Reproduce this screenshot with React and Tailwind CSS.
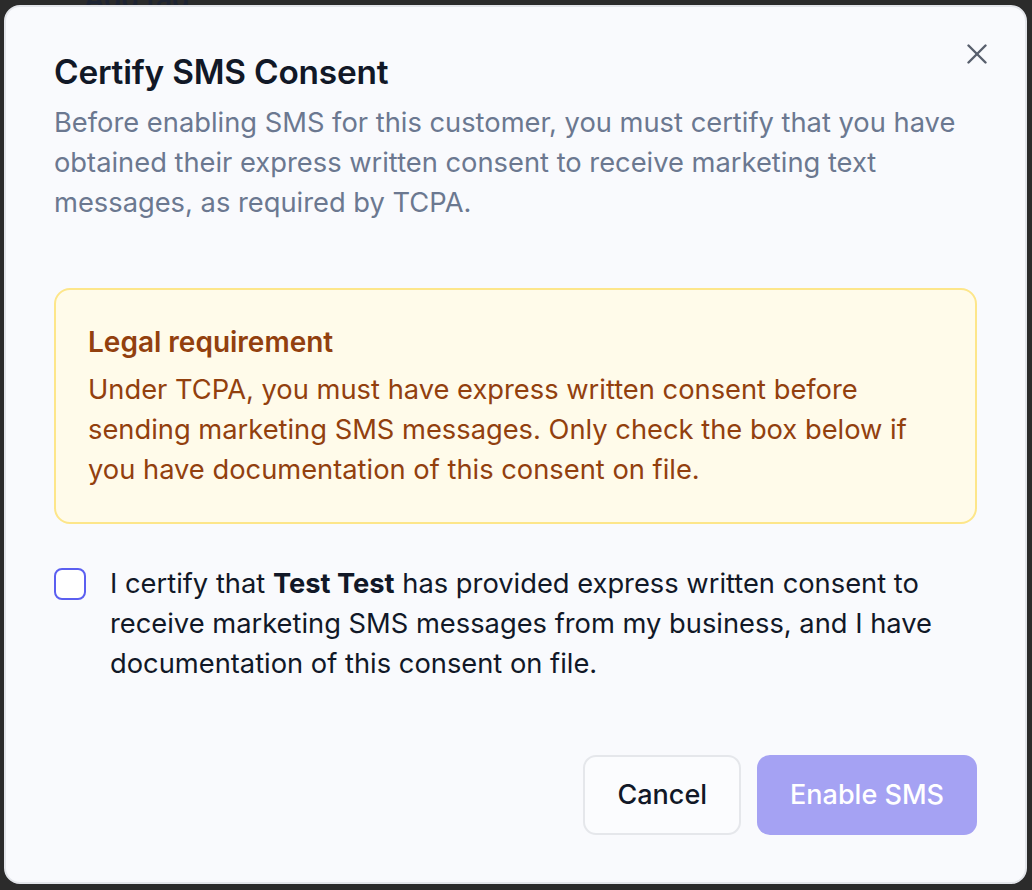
import React, { useState } from "react";

function CloseIcon() {
  return (
    <svg width="20" height="20" viewBox="0 0 20 20" fill="none" stroke="currentColor" strokeWidth="2.4" strokeLinecap="round">
      <path d="M1.5 1.5 18.5 18.5" />
      <path d="M18.5 1.5 1.5 18.5" />
    </svg>
  );
}

export default function App() {
  const [agreed, setAgreed] = useState(false);

  return (
    <div
      className="relative min-h-[890px] w-full overflow-hidden bg-[#2b2b2b]"
      style={{ fontFamily: "Inter, 'Noto Sans', sans-serif" }}
    >
      {/* page behind the modal */}
      <div className="flex items-center gap-3 pl-[84px] -mt-[22px] text-[28px] font-semibold text-[#1e2433]">
        <span>Add tag</span>
      </div>

      {/* modal */}
      <div className="absolute left-[4px] top-[5px] w-[1023px] h-[879px] rounded-2xl border-2 border-[#e3e5ea] bg-[#f9fafd] px-[48px] pt-[46px]">
        <button className="absolute right-[38px] top-[37px] text-[#585f6d]">
          <CloseIcon />
        </button>

        <h2 className="text-[33.4px] leading-[38px] font-semibold text-[#111827] tracking-[-0.2px]">
          Certify SMS Consent
        </h2>
        <p className="mt-[12px] text-[27.3px] leading-[40px] text-[#6b7890]">
          Before enabling SMS for this customer, you must certify that you have obtained their express written consent to receive marketing text messages, as required by TCPA.
        </p>

        <div className="mt-[65px] rounded-2xl border-2 border-[#fde68a] bg-[#fffbea] px-[32px] py-[32px] text-[#92400e]">
          <div className="text-[28px] leading-[40px] font-semibold">Legal requirement</div>
          <p className="mt-[8px] text-[27.3px] leading-[40px]">
            Under TCPA, you must have express written consent before sending marketing SMS messages. Only check the box below if you have documentation of this consent on file.
          </p>
        </div>

        <label className="mt-[40px] flex items-start gap-[24px] cursor-pointer">
          <input
            type="checkbox"
            checked={agreed}
            onChange={(e) => setAgreed(e.target.checked)}
            className="mt-[4px] h-[32px] w-[32px] shrink-0 appearance-none rounded-[8px] border-2 border-[#5b5ff0] bg-white"
          />
          <span className="text-[27.3px] leading-[40px] text-[#111827]">
            I certify that <strong className="font-bold">Test Test</strong> has provided express written consent to receive marketing SMS messages from my business, and I have documentation of this consent on file.
          </span>
        </label>

        <div className="mt-[71px] flex justify-end gap-[16px]">
          <button className="h-[80px] rounded-[13px] border-2 border-[#e5e7eb] bg-[#fbfcfe] px-[32px] text-[27px] font-medium text-[#111827]">
            Cancel
          </button>
          <button
            disabled={!agreed}
            className="h-[80px] rounded-[13px] bg-[#4f46e5] disabled:bg-[#a5a2f3] px-[33px] text-[27px] font-medium text-white"
          >
            Enable SMS
          </button>
        </div>
      </div>
    </div>
  );
}
